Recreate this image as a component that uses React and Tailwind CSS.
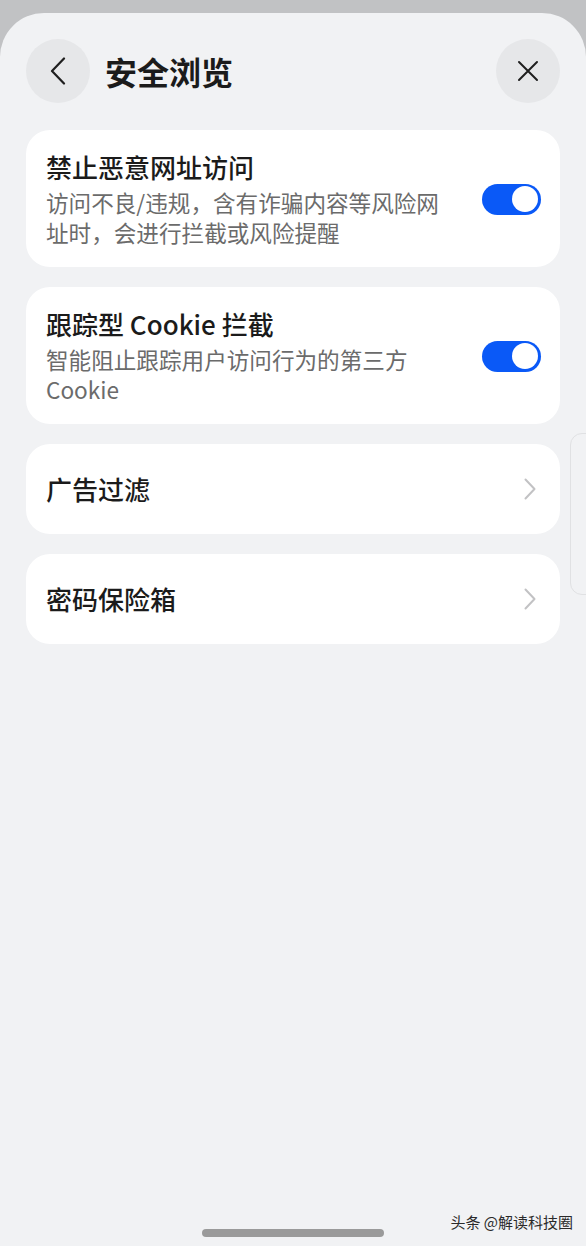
import React, { useState } from 'react';

const font = { fontFamily: '"Noto Sans CJK SC", "Noto Sans", sans-serif' };

function Toggle({ on, onClick }) {
  return (
    <button
      onClick={onClick}
      className={`flex h-[31px] w-[59px] shrink-0 items-center rounded-full px-[3px] ${
        on ? 'justify-end bg-[#0a59f7]' : 'justify-start bg-[#d4d5d8]'
      }`}
    >
      <span className="h-[26px] w-[26px] rounded-full bg-white" />
    </button>
  );
}

function Chevron() {
  return (
    <svg width="12" height="22" viewBox="0 0 12 22" fill="none" className="shrink-0">
      <path d="M1.5 1.5 L10.5 11 L1.5 20.5" stroke="#c2c2c4" strokeWidth="2" strokeLinecap="round" strokeLinejoin="round" />
    </svg>
  );
}

function SwitchCard({ title, desc, on, onToggle }) {
  return (
    <div className="flex items-center justify-between rounded-[24px] bg-white pb-[19px] pl-5 pr-[19px] pt-5">
      <div className="w-[398px]">
        <div className="text-[26px] font-medium leading-[34px] text-[#1b1b1b]">{title}</div>
        <div className="mt-1 text-[22.6px] leading-[30px] text-[#6b6b6b]">{desc}</div>
      </div>
      <Toggle on={on} onClick={onToggle} />
    </div>
  );
}

function LinkCard({ title }) {
  return (
    <div className="flex h-[90px] items-center justify-between rounded-[24px] bg-white pl-5 pr-[24px]">
      <div className="text-[26px] font-medium leading-[34px] text-[#1b1b1b]">{title}</div>
      <Chevron />
    </div>
  );
}

export default function App() {
  const [malicious, setMalicious] = useState(true);
  const [cookie, setCookie] = useState(true);

  return (
    <div className="flex h-[1246px] w-[586px] flex-col overflow-hidden bg-[#c1c2c4]" style={font}>
      <div className="relative mt-[13px] flex flex-1 flex-col rounded-t-[44px] bg-[#f1f2f4]">
        {/* Header */}
        <div className="flex h-[95px] items-center px-[26px] pt-[21px]">
          <button className="flex h-[64px] w-[64px] items-center justify-center rounded-full bg-[#e6e7e9]">
            <svg width="16" height="28" viewBox="0 0 16 28" fill="none">
              <path d="M14 1.5 L2 14 L14 26.5" stroke="#1f1f1f" strokeWidth="2.2" strokeLinecap="round" strokeLinejoin="round" />
            </svg>
          </button>
          <h1 className="ml-[15px] text-[32px] font-bold text-[#1b1b1b]">安全浏览</h1>
          <button className="ml-auto flex h-[64px] w-[64px] items-center justify-center rounded-full bg-[#e6e7e9]">
            <svg width="22" height="22" viewBox="0 0 22 22" fill="none">
              <path d="M2 2 L20 20 M20 2 L2 20" stroke="#1f1f1f" strokeWidth="2" strokeLinecap="round" />
            </svg>
          </button>
        </div>

        {/* Settings list */}
        <div className="mt-[22px] flex flex-col gap-5 px-[26px]">
          <SwitchCard
            title="禁止恶意网址访问"
            desc="访问不良/违规，含有诈骗内容等风险网址时，会进行拦截或风险提醒"
            on={malicious}
            onToggle={() => setMalicious(!malicious)}
          />
          <SwitchCard
            title="跟踪型 Cookie 拦截"
            desc="智能阻止跟踪用户访问行为的第三方Cookie"
            on={cookie}
            onToggle={() => setCookie(!cookie)}
          />
          <LinkCard title="广告过滤" />
          <LinkCard title="密码保险箱" />
        </div>

        {/* side edge handle */}
        <div className="absolute right-[-14px] top-[420px] h-[162px] w-[30px] rounded-[12px] border border-[#e0e1e3] bg-[#f1f2f4]" />

        {/* Bottom */}
        <div className="relative mt-auto flex h-[17px] justify-center">
          <div className="h-[8px] w-[182px] rounded-full bg-[#9a9a9a]" />
          <span className="absolute right-[13px] top-[-17px] text-[15px] leading-[20px] text-[#2a2a2a]">头条 @解读科技圈</span>
        </div>
      </div>
    </div>
  );
}
